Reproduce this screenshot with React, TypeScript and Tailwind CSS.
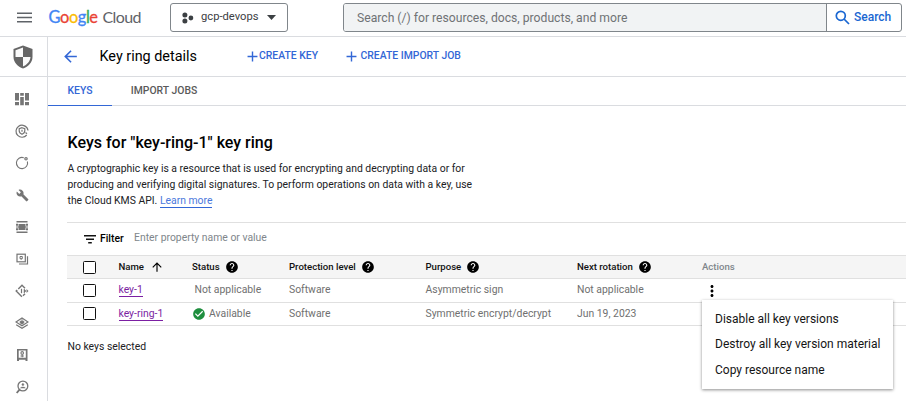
import type { ReactNode } from "react";
import { MdAdd, MdArrowBack, MdArrowUpward, MdBuild, MdCheckCircle, MdHelp, MdMoreVert } from "react-icons/md";

const G = "#757575";

function Icon({ children }: { children: ReactNode }) {
  return (
    <svg width="16" height="16" viewBox="0 0 16 16" fill="none" stroke={G} strokeWidth="1.2">
      {children}
    </svg>
  );
}

const sideIcons: ReactNode[] = [
  <Icon key="overview">
    <path
      stroke="none"
      fill={G}
      d="M1 2h4v7.500H1zM1 11h4v3.200H1zM6.200 2h3.600v2.700H6.200zM6.200 6h3.600v8.200H6.200zM11 2h4v7.500h-4zM11 11h4v3.200h-4z"
    />
  </Icon>,
  <Icon key="threats">
    <path d="M13.2 5.2A6 6 0 1 0 12.7 12M10.5 2.7A6 6 0 0 1 14 7.5" />
    <path d="M8 4.7l2.8 1v2c0 1.8-1.2 2.9-2.8 3.6-1.600-.7-2.8-1.800-2.800-3.600v-2z" />
    <path d="M8 6.800v2M11.500 9.500l1.500 1.300" />
  </Icon>,
  <Icon key="posture">
    <path d="M9.800 2.700A5.600 5.600 0 1 0 13.400 6.500" strokeWidth="1.100" />
    <circle cx="12" cy="3.800" r="1.200" />
  </Icon>,
  <MdBuild key="build" size={13} color={G} />,
  <Icon key="firewall">
    <path d="M2.500 2.800h11M2.500 13.200h11" strokeWidth="1.500" />
    <path stroke="none" fill={G} d="M4.500 5h7v6h-7zM2 4.700h2v2H2zM2 9.300h2v2H2zM12 4.700h2v2h-2zM12 9.300h2v2h-2zM2 7.500h12v1H2z" />
  </Icon>,
  <Icon key="certificates">
    <rect x="3" y="3.200" width="8.300" height="7.600" />
    <path d="M5 13h8.500V5.200" />
    <path d="M6 5.500h2.300v2.200H6zM7.200 7.700v1" strokeWidth="1" />
  </Icon>,
  <Icon key="access">
    <path d="M11 5.200L8 2.200 2.200 8 8 13.800l3-3" strokeWidth="1.400" strokeDasharray="9.500 1.500" />
    <path d="M7.500 5.800v4.400" />
    <path d="M10 6l2 2-2 2zM12.800 6.600L14.200 8l-1.400 1.400z" fill={G} strokeWidth="0.500" />
  </Icon>,
  <Icon key="layers">
    <path d="M2.200 9.800L8 13.300l5.800-3.500" strokeWidth="1.200" />
    <path d="M2 7l6-4 6 4-6 3.800z" strokeWidth="1.100" />
    <path d="M6.200 6.200h3.600v1.800L8 9.200 6.200 8zM8 3.500V7" fill={G} strokeWidth="0.800" />
  </Icon>,
  <Icon key="vault">
    <path fill={G} fillRule="evenodd" stroke="none" d="M3 2h10.500v12H11.500V12.800H5V14H3zM4.700 3.500v7.300h7.100V3.500z" />
    <circle cx="8.200" cy="5.900" r="1.300" strokeWidth="1.100" />
    <path d="M8.200 7.300v3M6.500 9h3.400" strokeWidth="1.100" />
  </Icon>,
  <Icon key="inspect">
    <circle cx="8.900" cy="7" r="4.900" strokeWidth="1.300" />
    <path d="M5.500 10.600L2.700 14" strokeWidth="1.800" />
    <circle cx="8.900" cy="5.600" r="1" fill={G} strokeWidth="0.500" />
    <path d="M6.500 9c.8-1.200 4-1.200 4.800 0z" fill={G} strokeWidth="0.500" />
  </Icon>,
];

function Shield() {
  return (
    <svg width="20" height="24" viewBox="0 0 20 24">
      <path d="M10 .5L19.500 4v8c0 5.400-4.200 9.600-9.500 11.500C4.700 21.600.5 17.400.5 12V4z" fill="#666" />
      <path d="M10 2.500V12H2.500V5.300zM10 12h7.500c-.3 4.200-3.500 7.800-7.500 9.500z" fill="#fafafa" />
    </svg>
  );
}

function Logo() {
  return (
    <div className="mb-[3px] flex w-[94px] items-baseline gap-[4px] font-[Lato] leading-[20px] whitespace-nowrap">
      <span className="w-[50px] text-[16.400px] tracking-[-0.400px] [-webkit-text-stroke:0.300px_currentColor]">
        <span className="text-[#4285f4]">G</span>
        <span className="text-[#ea4335]">o</span>
        <span className="text-[#fbbc04]">o</span>
        <span className="text-[#4285f4]">g</span>
        <span className="text-[#34a853]">l</span>
        <span className="text-[#ea4335]">e</span>
      </span>
      <span className="text-[16px] tracking-[-0.600px] text-[#5f6368]">Cloud</span>
    </div>
  );
}

function Checkbox() {
  return <span className="block size-[13px] rounded-[1.500px] border-[1.500px] border-[#111] bg-white" />;
}

const cols = "grid grid-cols-[51.500px_73.500px_97px_136.500px_151.500px_125px_1fr] items-center";

function Head({ label }: { label: string }) {
  return (
    <div className="flex items-center gap-[5px] text-[9.600px] font-medium text-[#111]">
      {label}
      <MdHelp size={14} color="#000" />
    </div>
  );
}

export default function App() {
  return (
    <div className="flex h-[401px] w-[906px] flex-col overflow-hidden bg-white font-[Roboto,sans-serif] text-[10.400px] text-[#202124]">
      <header className="flex h-[37px] shrink-0 items-center border-b border-[#dadce0] pl-[17px]">
        <svg width="15" height="11" viewBox="0 0 15 11" className="mr-[16.500px] mb-[2px]" stroke="#5f6368" strokeWidth="1.600">
          <path d="M0 1.200h15M0 5.500h15M0 9.800h15" />
        </svg>
        <Logo />
        <button className="mb-px ml-[27.500px] flex h-[29px] w-[118px] items-center rounded-[3px] border border-[#80868b] pl-[11px] text-[11.200px] text-[#3c4043]">
          <svg width="12" height="12" viewBox="0 0 12 12" fill="#3c4043" className="mr-[7px]">
            <circle cx="2.900" cy="3" r="2.500" />
            <circle cx="2.900" cy="9" r="2.500" />
            <circle cx="8.900" cy="6" r="2.400" />
          </svg>
          <span className="grow text-left">gcp-devops</span>
          <svg width="9" height="5" viewBox="0 0 9 5" className="mr-[11px]">
            <path d="M0 0h9L4.500 5z" fill="#3c4043" />
          </svg>
        </button>
        <div className="mb-px ml-[55px] flex h-[29px] w-[559px] overflow-hidden rounded-[3px] border border-[#80868b]">
          <div className="flex w-[483px] items-center border-r border-[#80868b] bg-[#f1f3f4] pt-px pl-[13px] text-[12.160px] text-[#6f7275]">
            Search (/) for resources, docs, products, and more
          </div>
          <div className="flex grow items-center pl-[8px] text-[12px] font-medium text-[#1a67d2]">
            <svg width="15" height="15" viewBox="0 0 15 15" fill="none" stroke="#1a67d2" strokeWidth="1.700" className="mr-[4px]">
              <circle cx="5.800" cy="5.800" r="4.500" />
              <path d="M9 9l5 5" />
            </svg>
            <span className="mb-[2px]">Search</span>
          </div>
        </div>
      </header>

      <div className="flex min-h-0 grow">
        <nav className="flex w-[48px] shrink-0 flex-col border-r border-[#dadce0]">
          <div className="flex h-[40px] shrink-0 items-center justify-center border-b border-[#dadce0] pr-[2px]">
            <Shield />
          </div>
          <div className="flex flex-col pt-[6px] pr-[3px]">
            {sideIcons.map((icon, i) => (
              <div key={i} className="flex h-[32px] shrink-0 items-center justify-center">
                {icon}
              </div>
            ))}
          </div>
        </nav>

        <main className="flex min-w-0 grow flex-col">
          <div className="flex h-[40px] shrink-0 items-center border-b border-[#dadce0] pb-px pl-[13px] text-[#3367d6]">
            <MdArrowBack size={19} />
            <h1 className="ml-[19.500px] w-[144px] pt-px text-[14.400px] text-black">Key ring details</h1>
            <button className="flex w-[99px] items-center text-[10.400px] font-medium whitespace-nowrap">
              <MdAdd size={17} className="mr-[-1.500px] shrink-0" />
              CREATE KEY
            </button>
            <button className="flex items-center text-[10.400px] font-medium whitespace-nowrap">
              <MdAdd size={17} className="mr-px shrink-0" />
              CREATE IMPORT JOB
            </button>
          </div>

          <div className="flex h-[29px] shrink-0 border-b border-[#dadce0] text-[10.400px] font-medium">
            <div className="-mb-px flex w-[64px] items-center justify-center border-b-[1.500px] border-[#3367d6] pb-px text-[#3367d6]">KEYS</div>
            <div className="flex items-center pl-[18.800px] text-[#5a5a5a]">IMPORT JOBS</div>
          </div>

          <div className="pl-[19.500px]">
            <h2 className="mt-[26px] text-[16px] leading-[22px] font-medium text-black">Keys for &quot;key-ring-1&quot; key ring</h2>
            <p className="mt-[7px] w-[415px] leading-[16px] text-[#202124]">
              A cryptographic key is a resource that is used for encrypting and decrypting data or for
              <br />
              producing and verifying digital signatures. To perform operations on data with a key, use
              <br />
              the Cloud KMS API. <a className="border-b border-[#3367d6] text-[#4a78dc]">Learn more</a>
            </p>
          </div>

          <section className="mt-[13px] ml-[19px] border-t border-[#e0e0e0]">
            <div className="flex h-[32px] items-center pl-[17px]">
              <svg width="12" height="9" viewBox="0 0 12 9" stroke="#111" strokeWidth="1.500" className="mr-[4px]">
                <path d="M0 .8h12M2 4.200h8M4.200 7.700h3.600" />
              </svg>
              <span className="w-[34px] font-medium text-black">Filter</span>
              <span className="pb-[2px] text-[#80868b]">Enter property name or value</span>
            </div>
            <div className={`${cols} h-[24px] border-y border-[#e0e0e0] bg-[#f5f5f5]`}>
              <div className="pl-[16px]">
                <Checkbox />
              </div>
              <div className="flex items-center gap-[6px] text-[9.600px] font-medium text-[#111]">
                Name
                <MdArrowUpward size={14} color="#000" />
              </div>
              <Head label="Status" />
              <Head label="Protection level" />
              <Head label="Purpose" />
              <Head label="Next rotation" />
              <div className="text-[9.600px] font-medium text-[#80868b]">Actions</div>
            </div>
            <div className={`${cols} h-[24px] border-b border-[#e0e0e0] pb-px text-[#707070]`}>
              <div className="pt-px pl-[16px]">
                <Checkbox />
              </div>
              <div className="leading-[12px]">
                <a className="border-b border-[#7b1fa2] text-[#7b1fa2]">key-1</a>
              </div>
              <div className="pl-[2.500px]">Not applicable</div>
              <div>Software</div>
              <div>Asymmetric sign</div>
              <div>Not applicable</div>
              <div className="relative pl-[0.500px]">
                <MdMoreVert size={18} color="#000" className="mt-px -mb-px" />
                <div className="absolute top-[19px] left-0 flex h-[89px] w-[191px] flex-col bg-white pt-[6px] pl-[13px] text-[12px] whitespace-nowrap text-[#151515] shadow-[0_1px_3px_rgba(0,0,0,0.45)]">
                  <div className="flex h-[25.500px] items-center">Disable all key versions</div>
                  <div className="flex h-[25.500px] items-center">Destroy all key version material</div>
                  <div className="flex h-[25.500px] items-center">Copy resource name</div>
                </div>
              </div>
            </div>
            <div className={`${cols} h-[23px] border-b border-[#e0e0e0] text-[#707070]`}>
              <div className="pb-px pl-[16px]">
                <Checkbox />
              </div>
              <div className="leading-[12px]">
                <a className="border-b border-[#7b1fa2] text-[#7b1fa2]">key-ring-1</a>
              </div>
              <div className="flex items-center gap-[3px]">
                <MdCheckCircle size={14} color="#1e8e3e" />
                Available
              </div>
              <div>Software</div>
              <div>Symmetric encrypt/decrypt</div>
              <div>Jun 19, 2023</div>
              <div />
            </div>
            <p className="mt-[13px] pl-[0.500px] text-[#202124]">No keys selected</p>
          </section>
        </main>
      </div>
    </div>
  );
}
